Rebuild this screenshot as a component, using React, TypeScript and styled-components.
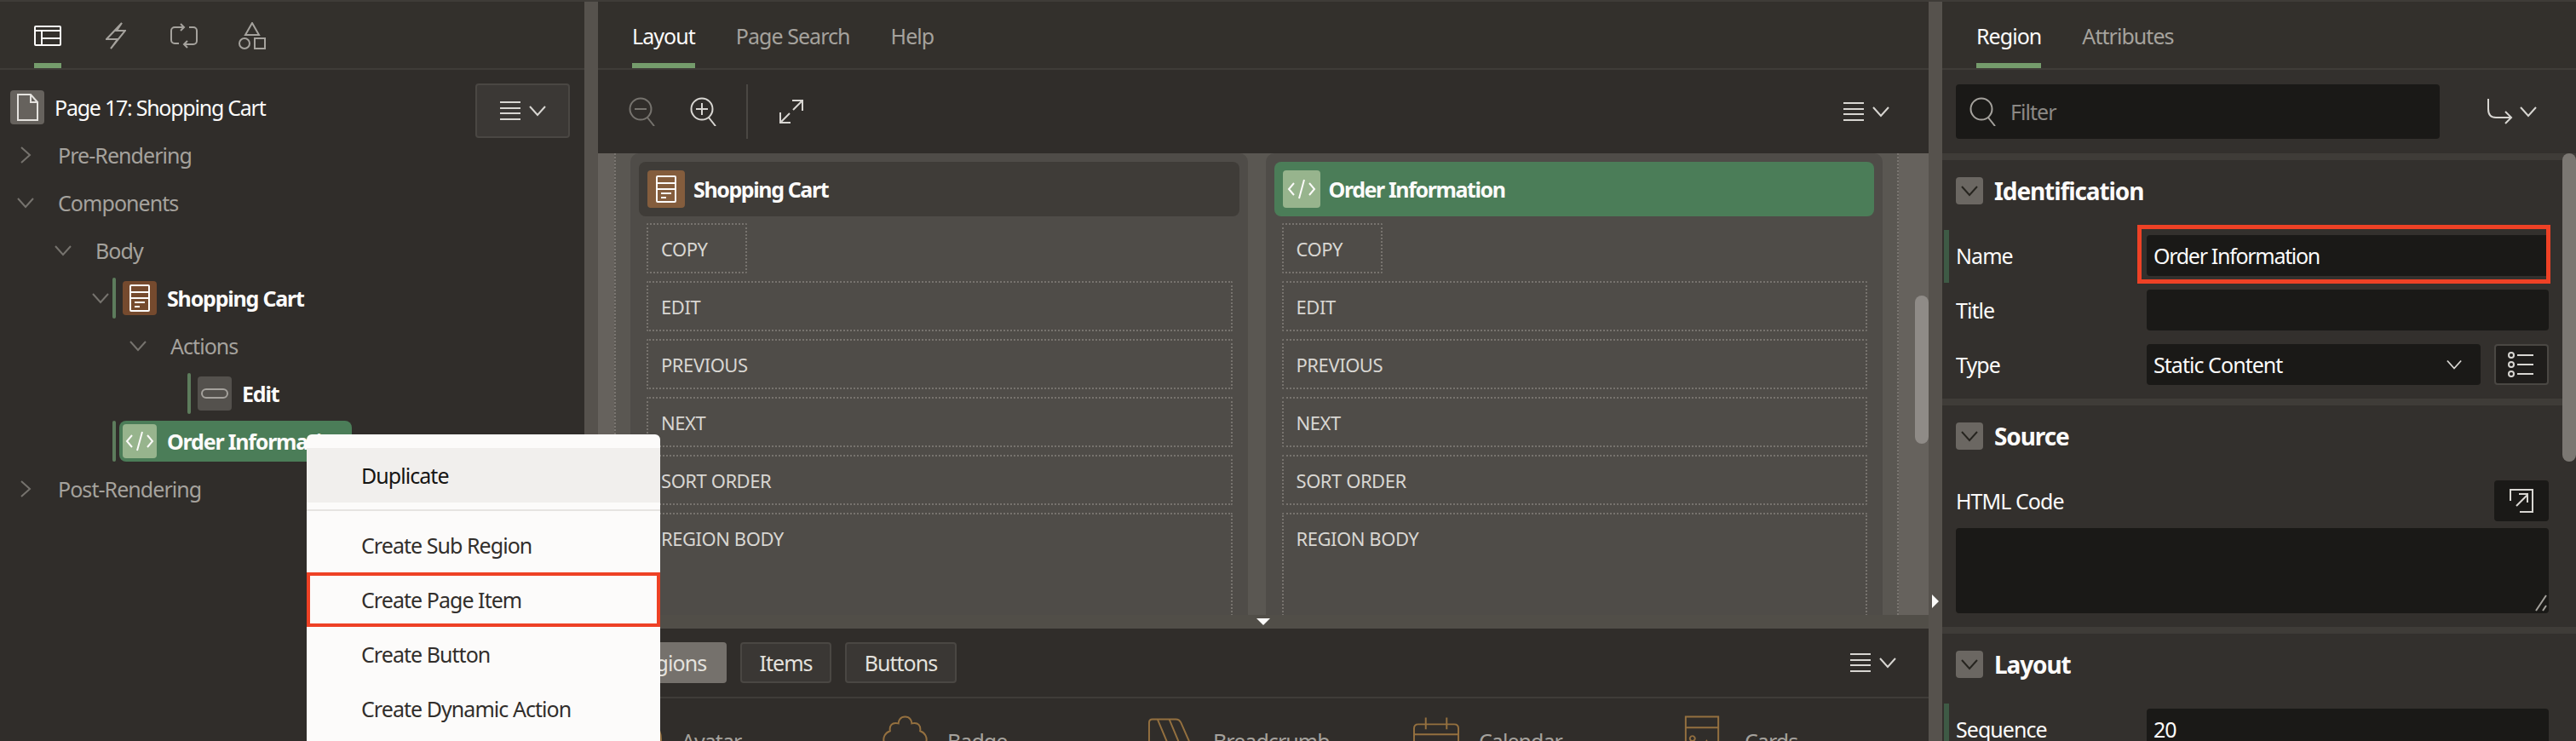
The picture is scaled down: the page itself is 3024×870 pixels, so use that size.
import React from 'react';
import styled, { createGlobalStyle } from 'styled-components';

const Global = createGlobalStyle`
  html, body { margin: 0; padding: 0; background: #302d2a; }
  * { box-sizing: border-box; }
  body { font-family: "Noto Sans", "Open Sans", sans-serif; font-size: 25px; letter-spacing: -0.95px; color: #fcfbfa; }
`;

const Page = styled.div`
  position: relative; width: 3024px; height: 870px; overflow: hidden;
  display: flex; padding-top: 2px; background: #3f3c38;
`;
const LeftPanel = styled.section`width: 686px; flex: none; background: #302d2a; display: flex; flex-direction: column;`;
const CenterPanel = styled.section`width: 1562px; flex: none; display: flex; flex-direction: column; background: #302d2a;`;
const RightPanel = styled.section`position: relative; width: 744px; flex: none; background: #33302d; display: flex; flex-direction: column; overflow: hidden;`;
const Splitter = styled.div`
  width: 16px; flex: none; background: #56524d; padding: 696px 0 0 4px;
`;
const SplitArrow = styled.i`
  display: block; width: 0; height: 0;
  border-left: 8px solid #fcfbfa; border-top: 8px solid transparent; border-bottom: 8px solid transparent;
`;
const TabBar = styled.nav`
  height: 80px; flex: none; display: flex; gap: 48px; padding-left: 40px;
  background: #33302c; border-bottom: 2px solid #3f3c38;
`;
const Tab = styled.div<{ $on?: boolean }>`
  height: 78px; padding-top: 8px; display: flex; align-items: center; justify-content: center;
  border-bottom: 6px solid ${p => (p.$on ? '#759c6c' : 'transparent')};
  color: ${p => (p.$on ? '#fcfbfa' : '#a5a29d')};
`;
const IconTab = styled(Tab)`width: 32px;`;

const Tree = styled.div`padding-top: 16px; flex: 1; position: relative;`;
const Row = styled.div<{ $level: number }>`
  height: 56px; display: flex; align-items: center; padding-left: ${p => 8 + p.$level * 44}px;
  color: #a5a29d;
`;
const PageRow = styled.div`
  height: 56px; display: flex; align-items: flex-start; padding: 8px 17px 0 12px; justify-content: space-between;
`;
const PageTitle = styled.div`display: flex; align-items: center; gap: 12px; height: 40px; letter-spacing: -1.25px;`;
const PageIcon = styled.span`
  width: 40px; height: 40px; background: #66625d; border-radius: 4px; display: flex; align-items: center; justify-content: center;
`;
const MenuButton = styled.div`
  width: 111px; height: 64px; margin-top: -8px; flex: none; border: 2px solid #4a4743; border-radius: 4px; background: #3b3835;
  display: flex; align-items: center; justify-content: center;
`;
const BurgerGroup = styled.span`display: flex; align-items: center; gap: 10px; flex: none;`;
const Toggle = styled.span`width: 44px; flex: none; display: flex; align-items: center; justify-content: center; color: #76736e;`;
const RowLabel = styled.span`margin-left: 16px;`;
const Node = styled.div`
  margin-left: -8px; height: 48px; display: flex; align-items: stretch; gap: 4px; color: #fcfbfa; font-weight: 700; letter-spacing: -1.2px;
`;
const NodeBar = styled.i`display: block; width: 4px; border-radius: 2px; background: #5d7c5c;`;
const NodeBody = styled.div<{ $selected?: boolean }>`
  display: flex; align-items: center; gap: 12px; border-radius: 8px;
  padding: 0 ${p => (p.$selected ? 7 : 0)}px 0 4px;
  background: ${p => (p.$selected ? '#4b7d58' : 'transparent')};
`;
const IconTile = styled.span<{ $bg: string; $w?: number; $h?: number }>`
  width: ${p => p.$w ?? 40}px; height: ${p => p.$h ?? 40}px; flex: none; border-radius: 4px; background: ${p => p.$bg};
  display: flex; align-items: center; justify-content: center;
`;

const Toolbar = styled.div`
  height: 98px; flex: none; display: flex; align-items: center; padding: 0 46px 0 36px; background: #302d2a;
`;
const ToolGap = styled.i`display: block; width: 40px; flex: none;`;
const ToolSep = styled.i`display: block; width: 2px; height: 64px; margin: 0 37px 0 34px; background: #4a4743;`;
const Grow = styled.div`flex: 1;`;
const Canvas = styled.div`
  height: 542px; flex: none; overflow: hidden; position: relative; background: #66625d; padding: 0 35px 0 19px;
`;
const BodyZone = styled.div`
  display: grid; grid-template-columns: 1fr 1fr; gap: 21px; height: 100%; padding: 0 17px;
  background: #5a5752; border-left: 2px dotted #7a7671; border-right: 2px dotted #7a7671;
`;
const Card = styled.article`background: #4f4c48; border-radius: 10px 10px 0 0; padding: 10px; min-height: 600px;`;
const CardHead = styled.header<{ $on?: boolean }>`
  height: 64px; margin-bottom: -1px; border-radius: 8px; padding: 0 10px; display: flex; align-items: center; gap: 10px; letter-spacing: -1.4px;
  background: ${p => (p.$on ? '#4b7d58' : '#3f3c38')}; font-weight: 700;
`;
const Slot = styled.div<{ $small?: boolean; $tall?: boolean }>`
  margin: 9px 8px 0 9px; height: ${p => (p.$tall ? 180 : 59)}px; width: ${p => (p.$small ? '118px' : 'auto')};
  border: 2px dotted #77736e; padding: 0 15px; font-size: 22px; letter-spacing: -0.45px; line-height: 57px; color: #d8d6d2; border-radius: 2px;
`;
const ScrollThumb = styled.i`
  position: absolute; right: 0; top: 167px; width: 16px; height: 174px; border-radius: 8px; background: #8f8b87;
`;
const Handle = styled.div`height: 16px; flex: none; background: #514e48; display: flex; justify-content: center; padding-top: 4px;`;
const HandleArrow = styled.i`
  display: block; width: 0; height: 0; border-top: 8px solid #fcfbfa; border-left: 8px solid transparent; border-right: 8px solid transparent;
`;
const GalleryBar = styled.div`
  height: 82px; flex: none; display: flex; align-items: center; gap: 16px; padding: 0 38px 0 16px; border-bottom: 2px solid #3f3c38; background: #302d2a;
`;
const Pill = styled.div<{ $on?: boolean; $w: number }>`
  width: ${p => p.$w}px; height: 48px; border-radius: 4px; border: 2px solid ${p => (p.$on ? '#75716c' : '#4a4743')};
  background: ${p => (p.$on ? '#75716c' : '#3a3734')}; display: flex; align-items: center; justify-content: center; color: #e4e2de;
`;
const Gallery = styled.div`flex: 1; display: flex; padding: 20px 0 0 21px; background: #302d2a; overflow: hidden;`;
const GalleryItem = styled.div`width: 312px; flex: none; display: flex; gap: 22px; color: #a5a29d; line-height: 36px;`;
const GalleryGlyph = styled.span`width: 55px; flex: none; display: flex; justify-content: center;`;
const GalleryText = styled.span`padding-top: 12px;`;

const FilterRow = styled.div`height: 98px; flex: none; display: flex; align-items: center; padding: 0 46px 0 16px; justify-content: space-between;`;
const FilterBox = styled.div`
  width: 568px; height: 64px; background: #1a1917; border-radius: 4px; display: flex; align-items: center; gap: 16px; padding-left: 16px; color: #8b8884;
`;
const Jump = styled.div`display: flex; align-items: center; gap: 8px;`;
const Section = styled.div`border-top: 8px solid #3f3c38; padding: 20px 32px 16px 16px;`;
const SectionHead = styled.div`height: 32px; display: flex; align-items: center; gap: 13px; font-weight: 700; font-size: 28px; letter-spacing: -1.1px;`;
const SectionToggle = styled.span`
  width: 32px; height: 32px; background: #6b6762; border-radius: 4px; display: flex; align-items: center; justify-content: center; color: #26241f;
`;
const Fields = styled.div`display: flex; flex-direction: column; gap: 16px; margin-top: 36px;`;
const Field = styled.div<{ $mark?: boolean }>`
  position: relative; display: grid; grid-template-columns: 224px 1fr; align-items: center; height: 48px;
  ${p => p.$mark && `&::before { content: ""; position: absolute; left: -14px; top: -6px; width: 6px; height: 62px; background: #3e5a45; }`}
`;
const InputWrap = styled.div`position: relative; display: flex; gap: 16px;`;
const Input = styled.div<{ $tight?: boolean }>`
  flex: 1; height: 48px; background: #1a1917; border-radius: 4px; padding: 0 22px 0 8px; line-height: 48px; color: #fcfbfa;
  display: flex; justify-content: space-between; align-items: center;
  ${p => p.$tight && 'letter-spacing: -1.3px;'}
`;
const PopupBtn = styled.div`
  width: 64px; height: 48px; flex: none; background: #1f1d1b; border: 2px solid #4a4743; border-radius: 4px; display: flex; align-items: center; justify-content: center;
`;
const Annotation = styled.i`
  position: absolute; left: -11px; right: -2px; top: -12px; bottom: -9px; border: 5px solid #ee4125; pointer-events: none;
`;
const CodeHead = styled.div`display: flex; justify-content: space-between; align-items: center; margin-top: 36px;`;
const ExpandBtn = styled.div`width: 64px; height: 48px; background: #1a1917; border-radius: 4px; display: flex; align-items: center; justify-content: center;`;
const TextArea = styled.div`position: relative; height: 100px; margin-top: 8px; background: #1a1917; border-radius: 4px;`;
const Grip = styled.svg`position: absolute; right: 2px; bottom: 2px;`;
const PanelThumb = styled.i`position: absolute; right: 0; top: 178px; width: 16px; height: 362px; border-radius: 8px; background: #7b7772;`;

const Menu = styled.div`
  position: absolute; left: 360px; top: 510px; width: 415px; height: 360px; background: #fcfbfa; border-radius: 6px 6px 0 0; padding-top: 16px; color: #312e2b;
`;
const MenuItem = styled.div<{ $hot?: boolean; $hl?: boolean }>`
  height: 64px; padding-left: ${p => (p.$hl ? 60 : 64)}px; display: flex; align-items: center;
  background: ${p => (p.$hot ? '#f1efed' : 'transparent')}; color: ${p => (p.$hot ? '#161513' : '#312e2b')};
  ${p => p.$hl && 'border: 4px solid #ee4125;'}
`;
const MenuSep = styled.hr`margin: 8px 0 8px; border: 0; height: 2px; background: #e6e4e1;`;

const Line = (p: React.SVGProps<SVGSVGElement>) => <svg fill="none" stroke="currentColor" strokeWidth={2} {...p} />;

const Chevron = ({ dir = 'down', size = 20, color = 'currentColor', w = 2 }: { dir?: 'down' | 'right'; size?: number; color?: string; w?: number }) => (
  <svg width={size} height={size} viewBox="0 0 20 20" fill="none" stroke={color} strokeWidth={w}>
    {dir === 'down' ? <path d="M1 5 L10 15 L19 5" /> : <path d="M5 1 L15 10 L5 19" />}
  </svg>
);
const Burger = () => (
  <svg width="24" height="22" viewBox="0 0 24 22" stroke="#d8d6d2" strokeWidth="2">
    <path d="M0 1H24M0 8H24M0 14H24M0 21H24" />
  </svg>
);
const BurgerMenu = () => (<BurgerGroup><Burger /><Chevron size={20} color="#d8d6d2" /></BurgerGroup>);
const RegionGlyph = () => (
  <Line width="24" height="32" viewBox="0 0 24 32" stroke="#fcfbfa">
    <rect x="1" y="1" width="22" height="30" rx="1" />
    <path d="M1 9H23M1 16H23M6 21H18M6 26H12" />
  </Line>
);
const CodeGlyph = () => (
  <Line width="34" height="24" viewBox="0 0 34 24" stroke="#fcfbfa">
    <path d="M8 5 L2 12 L8 19M26 5 L32 12 L26 19M20 1 L14 23" />
  </Line>
);
const Magnifier = ({ sign, color }: { sign?: 'plus' | 'minus'; color: string }) => (
  <Line width="32" height="34" viewBox="0 0 32 34" stroke={color}>
    <circle cx="14" cy="14" r="12.5" />
    <path d="M22 24 L30 34" />
    {sign && <path d="M7 14H21" />}
    {sign === 'plus' && <path d="M14 7V21" />}
  </Line>
);

const tree = (
  <Tree>
    <PageRow>
      <PageTitle>
        <PageIcon>
          <Line width="26" height="32" viewBox="0 0 26 32" stroke="#e4e2de">
            <path d="M2 1H17L25 10V31H2Z M17 1V10H25" />
          </Line>
        </PageIcon>
        Page 17: Shopping Cart
      </PageTitle>
      <MenuButton><BurgerMenu /></MenuButton>
    </PageRow>
    <Row $level={0}><Toggle><Chevron dir="right" /></Toggle><RowLabel>Pre-Rendering</RowLabel></Row>
    <Row $level={0}><Toggle><Chevron /></Toggle><RowLabel>Components</RowLabel></Row>
    <Row $level={1}><Toggle><Chevron /></Toggle><RowLabel>Body</RowLabel></Row>
    <Row $level={2}>
      <Toggle><Chevron /></Toggle>
      <Node><NodeBar /><NodeBody><IconTile $bg="#754a2e"><RegionGlyph /></IconTile>Shopping Cart</NodeBody></Node>
    </Row>
    <Row $level={3}><Toggle><Chevron /></Toggle><RowLabel>Actions</RowLabel></Row>
    <Row $level={4}>
      <Toggle />
      <Node>
        <NodeBar />
        <NodeBody>
          <IconTile $bg="#54514d">
            <Line width="32" height="12" viewBox="0 0 32 12" stroke="#a5a29d"><rect x="1" y="1" width="30" height="10" rx="5" /></Line>
          </IconTile>
          Edit
        </NodeBody>
      </Node>
    </Row>
    <Row $level={2}>
      <Toggle />
      <Node><NodeBar /><NodeBody $selected><IconTile $bg="#97b48d"><CodeGlyph /></IconTile>Order Information</NodeBody></Node>
    </Row>
    <Row $level={0}><Toggle><Chevron dir="right" /></Toggle><RowLabel>Post-Rendering</RowLabel></Row>
  </Tree>
);

const slots = ['EDIT', 'PREVIOUS', 'NEXT', 'SORT ORDER'];
const RegionCard = ({ title, on }: { title: string; on?: boolean }) => (
  <Card>
    <CardHead $on={on}>
      <IconTile $bg={on ? '#97b48d' : '#845d3d'} $w={44} $h={44}>{on ? <CodeGlyph /> : <RegionGlyph />}</IconTile>
      {title}
    </CardHead>
    <Slot $small>COPY</Slot>
    {slots.map(s => <Slot key={s}>{s}</Slot>)}
    <Slot $tall>REGION BODY</Slot>
  </Card>
);

const gold = '#94703f';
const gallery = [
  { name: 'Avatar', glyph: <circle cx="28" cy="28" r="26" /> },
  { name: 'Badge', glyph: <path d="M28 1 C22 1 20 6 20 9 C12 7 9 12 10 18 C4 20 1 26 3 32 C1 38 4 44 10 46 L46 46 C52 44 55 38 53 32 C55 26 52 20 46 18 C47 12 44 7 36 9 C36 6 34 1 28 1Z" /> },
  { name: 'Breadcrumb', glyph: <path d="M2 8 Q2 4 6 4 H34 Q38 4 40 8 L55 42 V54 H2Z M12 4 L28 42 V54 M26 4 L42 42 V54" /> },
  { name: 'Calendar', glyph: <path d="M6 10 H49 Q54 10 54 15 V54 H1 V15 Q1 10 6 10Z M1 22 H54 M15 2 V16 M40 2 V16 M12 34 V37 M21 34 V37 M30 34 V37 M39 34 V37" /> },
  { name: 'Cards', glyph: <path d="M8 1 H47 V56 H8Z M8 14 H47 M13 38 L23 50 L33 30 L44 46 M16 24 a3 3 0 1 0 0.1 0" /> },
];

export default function App() {
  return (
    <Page>
      <Global />
      <LeftPanel>
        <TabBar>
          <IconTab $on>
            <Line width="32" height="24" viewBox="0 0 32 24" stroke="#fcfbfa">
              <rect x="1" y="1" width="30" height="22" rx="1" /><path d="M1 6H31M9 6V23M9 15H31" />
            </Line>
          </IconTab>
          <IconTab>
            <Line width="24" height="32" viewBox="0 0 24 32"><path d="M19 1 L1 20 H14 L6 31 L23 10 H13 Z" /></Line>
          </IconTab>
          <IconTab>
            <Line width="32" height="30" viewBox="0 0 32 30"><path d="M16 5 H5 a4 4 0 0 0 -4 4 V20 a4 4 0 0 0 4 4 H10M12 1 L16 5 L12 9M16 25 H27 a4 4 0 0 0 4 -4 V9 a4 4 0 0 0 -4 -4 H22M20 21 L16 25 L20 29" /></Line>
          </IconTab>
          <IconTab>
            <Line width="32" height="32" viewBox="0 0 32 32"><path d="M16 1 L8 15 H24Z" /><circle cx="7" cy="25" r="6" /><rect x="19" y="19" width="12" height="12" /></Line>
          </IconTab>
        </TabBar>
        {tree}
      </LeftPanel>
      <Splitter />
      <CenterPanel>
        <TabBar>
          <Tab $on>Layout</Tab><Tab>Page Search</Tab><Tab>Help</Tab>
        </TabBar>
        <Toolbar>
          <Magnifier sign="minus" color="#76736e" />
          <ToolGap />
          <Magnifier sign="plus" color="#d8d6d2" />
          <ToolSep />
          <Line width="28" height="28" viewBox="0 0 28 28" stroke="#d8d6d2"><path d="M16 12 L27 1 M15 1 H27 V13 M12 16 L1 27 M1 15 V27 H13" /></Line>
          <Grow />
          <BurgerMenu />
        </Toolbar>
        <Canvas>
          <BodyZone>
            <RegionCard title="Shopping Cart" />
            <RegionCard title="Order Information" on />
          </BodyZone>
          <ScrollThumb />
        </Canvas>
        <Handle><HandleArrow /></Handle>
        <GalleryBar>
          <Pill $on $w={135}>Regions</Pill>
          <Pill $w={107}>Items</Pill>
          <Pill $w={131}>Buttons</Pill>
          <Grow />
          <BurgerMenu />
        </GalleryBar>
        <Gallery>
          {gallery.map(g => (
            <GalleryItem key={g.name}>
              <GalleryGlyph>
                <Line width="56" height="60" viewBox="0 0 56 60" stroke={gold}>{g.glyph}</Line>
              </GalleryGlyph>
              <GalleryText>{g.name}</GalleryText>
            </GalleryItem>
          ))}
        </Gallery>
      </CenterPanel>
      <Splitter><SplitArrow /></Splitter>
      <RightPanel>
        <TabBar>
          <Tab $on>Region</Tab><Tab>Attributes</Tab>
        </TabBar>
        <FilterRow>
          <FilterBox>
            <Magnifier color="#a5a29d" />
            Filter
          </FilterBox>
          <Jump>
            <Line width="30" height="30" viewBox="0 0 30 30" stroke="#d8d6d2"><path d="M1 0 V12 Q1 22 10 22 H28 M21 15 L28 22 L21 29" /></Line>
            <Chevron color="#d8d6d2" />
          </Jump>
        </FilterRow>
        <Section>
          <SectionHead><SectionToggle><Chevron /></SectionToggle>Identification</SectionHead>
          <Fields>
            <Field $mark>Name<InputWrap><Input $tight>Order Information</Input><Annotation /></InputWrap></Field>
            <Field>Title<InputWrap><Input /></InputWrap></Field>
            <Field>Type
              <InputWrap>
                <Input>Static Content<Chevron color="#d8d6d2" size={18} /></Input>
                <PopupBtn>
                  <Line width="32" height="32" viewBox="0 0 32 32" stroke="#d8d6d2">
                    <circle cx="4" cy="5" r="3" /><circle cx="4" cy="16" r="3" /><circle cx="4" cy="27" r="3" />
                    <path d="M11 5H30M11 16H30M11 27H30" />
                  </Line>
                </PopupBtn>
              </InputWrap>
            </Field>
          </Fields>
        </Section>
        <Section>
          <SectionHead><SectionToggle><Chevron /></SectionToggle>Source</SectionHead>
          <CodeHead>
            HTML Code
            <ExpandBtn>
              <Line width="28" height="28" viewBox="0 0 28 28" stroke="#d8d6d2"><path d="M1 14 V1 H27 V27 H12 M8 20 L21 7 M11 6 H21 V16" /></Line>
            </ExpandBtn>
          </CodeHead>
          <TextArea>
            <Grip width="14" height="20" viewBox="0 0 14 20" fill="none" stroke="#a5a29d" strokeWidth="2"><path d="M1 19 L13 1 M9 19 L13 13" /></Grip>
          </TextArea>
        </Section>
        <Section>
          <SectionHead><SectionToggle><Chevron /></SectionToggle>Layout</SectionHead>
          <Fields>
            <Field $mark>Sequence<InputWrap><Input>20</Input></InputWrap></Field>
          </Fields>
        </Section>
        <PanelThumb />
      </RightPanel>
      <Menu>
        <MenuItem $hot>Duplicate</MenuItem>
        <MenuSep />
        <MenuItem>Create Sub Region</MenuItem>
        <MenuItem $hl>Create Page Item</MenuItem>
        <MenuItem>Create Button</MenuItem>
        <MenuItem>Create Dynamic Action</MenuItem>
      </Menu>
    </Page>
  );
}
